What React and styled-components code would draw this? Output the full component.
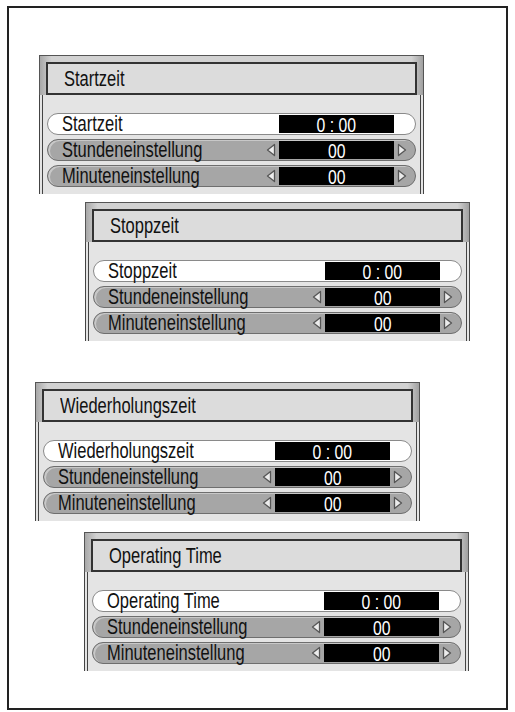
import React from 'react';
import styled, { createGlobalStyle } from 'styled-components';

const GlobalStyle = createGlobalStyle`
  body {
    margin: 0;
    background: #fff;
    font-family: 'Liberation Sans Narrow', 'Arial Narrow', 'Liberation Sans', sans-serif;
  }
`;

const Page = styled.div`
  width: 515px;
  height: 712px;
  padding: 6px 7px 0;
  box-sizing: border-box;
`;

const Frame = styled.div`
  width: 501px;
  height: 704px;
  border: 2px solid #222;
  box-sizing: border-box;
  display: flex;
  flex-direction: column;
`;

const Panel = styled.div`
  width: 385px;
  margin-left: ${(p) => p.left}px;
  margin-top: ${(p) => p.top}px;
  display: flex;
  flex-direction: column;
`;

const HeaderBevel = styled.div`
  padding: 6px 6px 0;
  border: 1px solid #555;
  border-bottom: none;
  background: linear-gradient(90deg, #a8a8a8, #d2d2d2 3%, #d2d2d2 97%, #a0a0a0);
`;

const HeaderBox = styled.div`
  height: 33px;
  box-sizing: border-box;
  border: 2px solid #333;
  background: #dcdcdc;
  padding-left: 16px;
  display: flex;
  align-items: center;
  font-size: 22px;
  color: #111;
`;

/* the reference uses a condensed face; squeeze the regular one */
const Narrow = styled.span`
  display: inline-block;
  white-space: nowrap;
  line-height: 1;
  transform: scaleX(0.75);
  transform-origin: ${(p) => (p.center ? 'center' : 'left')} center;
`;

const Body = styled.div`
  background: #e4e4e4;
  border-left: 4px double #444;
  border-right: 4px double #444;
  padding: 18px 4px 7px 4px;
  display: flex;
  flex-direction: column;
  gap: 4px;
`;

const Row = styled.div`
  height: 22px;
  box-sizing: border-box;
  border-radius: 11px;
  border: 1.5px solid ${(p) => (p.active ? '#8a8a8a' : '#6e6e6e')};
  background: ${(p) => (p.active ? '#fff' : '#a6a6a6')};
  box-shadow: inset 2px 1px 0 ${(p) => (p.active ? '#fff' : '#c8c8c8')};
  display: flex;
  align-items: center;
  padding-left: 14px;
  font-size: 22px;
  color: #111;
`;

const Label = styled.span`
  flex: 1;
  display: flex;
  align-items: center;
`;

const ArrowSlot = styled.span`
  width: ${(p) => p.w || 16}px;
  display: flex;
  justify-content: center;
  align-items: center;
`;

const Value = styled.span`
  width: 115px;
  height: 18px;
  background: #000;
  color: #fff;
  font-size: 21px;
  display: flex;
  justify-content: center;
  align-items: center;
`;

const Arrow = ({ dir }) => (
  <svg width="10" height="14" viewBox="0 0 10 14">
    {dir === 'left' ? (
      <path d="M8.5 1.5 L1.5 7 L8.5 12.5 Z" fill="#ececec" stroke="#555" strokeWidth="1.3" strokeLinejoin="round" />
    ) : (
      <path d="M1.5 1.5 L8.5 7 L1.5 12.5 Z" fill="#ececec" stroke="#555" strokeWidth="1.3" strokeLinejoin="round" />
    )}
  </svg>
);

const panels = [
  { title: 'Startzeit', left: 30, top: 47 },
  { title: 'Stoppzeit', left: 76, top: 8 },
  { title: 'Wiederholungszeit', left: 26, top: 41 },
  { title: 'Operating Time', left: 75, top: 11 },
];

const TimerPanel = ({ title, left, top }) => (
  <Panel left={left} top={top}>
    <HeaderBevel>
      <HeaderBox>
        <Narrow>{title}</Narrow>
      </HeaderBox>
    </HeaderBevel>
    <Body>
      <Row active>
        <Label><Narrow>{title}</Narrow></Label>
        <ArrowSlot />
        <Value><Narrow center>0 : 00</Narrow></Value>
        <ArrowSlot />
        <ArrowSlot w={5} />
      </Row>
      {['Stundeneinstellung', 'Minuteneinstellung'].map((label) => (
        <Row key={label}>
          <Label><Narrow>{label}</Narrow></Label>
          <ArrowSlot><Arrow dir="left" /></ArrowSlot>
          <Value><Narrow center>00</Narrow></Value>
          <ArrowSlot><Arrow dir="right" /></ArrowSlot>
          <ArrowSlot w={5} />
        </Row>
      ))}
    </Body>
  </Panel>
);

export default function App() {
  return (
    <Page>
      <GlobalStyle />
      <Frame>
        {panels.map((p) => (
          <TimerPanel key={p.title} {...p} />
        ))}
      </Frame>
    </Page>
  );
}
